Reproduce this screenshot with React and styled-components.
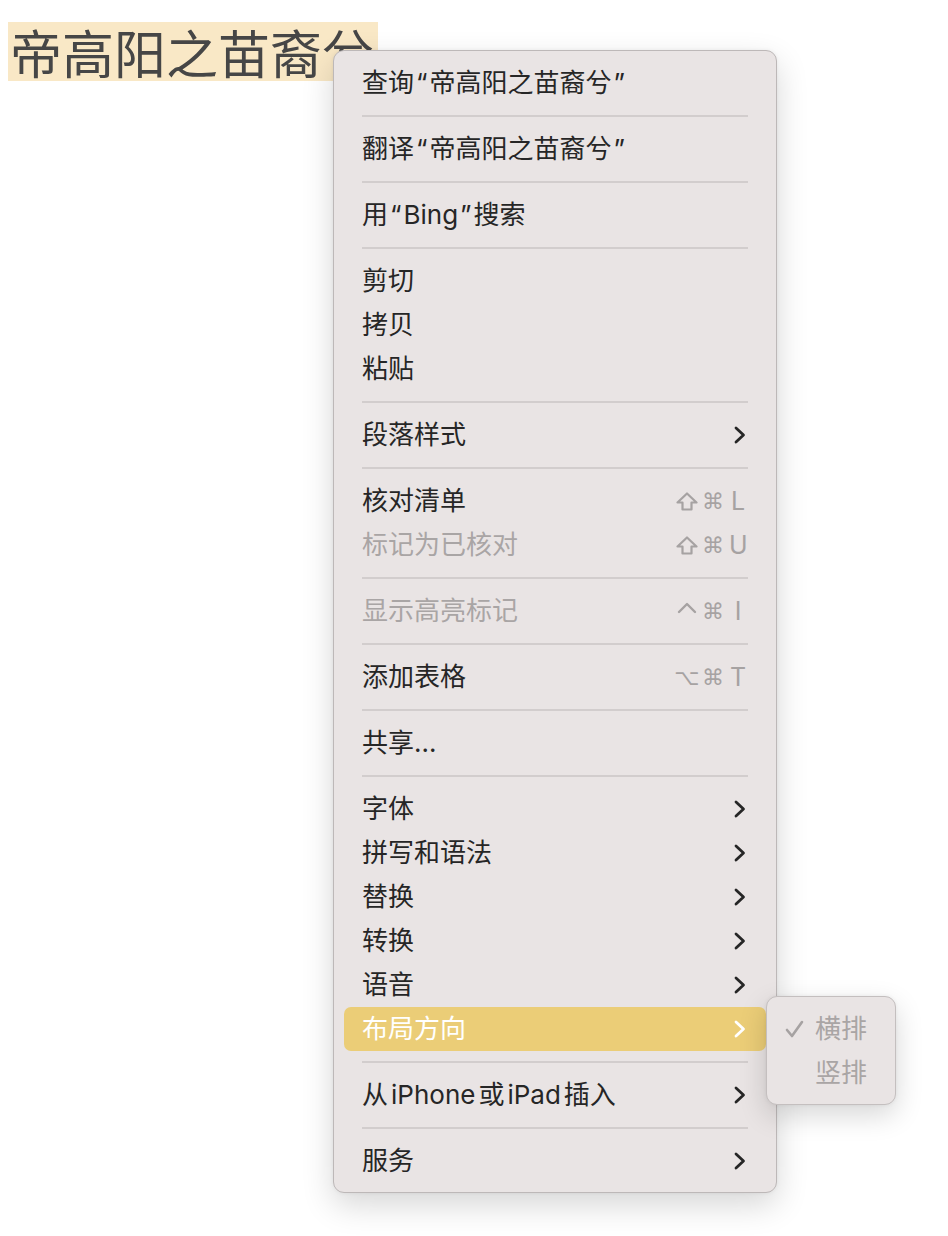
import React from "react";
import styled, { createGlobalStyle } from "styled-components";

const GlobalStyle = createGlobalStyle`
  html, body { margin: 0; padding: 0; background: #ffffff; }
  body { font-family: "Inter", "Noto Sans CJK SC", sans-serif; }
`;

const Page = styled.div`
  position: relative;
  width: 948px;
  height: 1236px;
  padding: 22px 0 0 8px;
  box-sizing: border-box;
  overflow: hidden;
`;

const Title = styled.span`
  display: inline-block;
  height: 59px;
  line-height: 59px;
  padding: 0 4px 0 2px;
  background: #f9e8c6;
  color: #464646;
  font-family: "Noto Sans CJK SC", sans-serif;
  font-size: 52px;
`;

const Menu = styled.div`
  position: absolute;
  left: 333px;
  top: 50px;
  width: 444px;
  box-sizing: border-box;
  padding: 10px 10px 9px;
  background: #e9e4e4;
  border: 1px solid #bdb8b8;
  border-radius: 11px;
  box-shadow: 0 12px 32px rgba(0, 0, 0, 0.16), 0 0 4px rgba(0, 0, 0, 0.06);
`;

const Row = styled.div`
  position: relative;
  display: flex;
  align-items: center;
  height: 44px;
  padding: 0 20px 0 18px;
  border-radius: 7px;
  background: ${(p) => (p.$active ? "#ebcd77" : "transparent")};
  color: ${(p) => (p.$active ? "#ffffff" : p.$disabled ? "#a9a5a5" : "#262626")};
  font-size: 26px;
  white-space: nowrap;
`;

const Label = styled.span`
  flex: 1;
  padding-bottom: 6px;
`;

const Quote = styled.span`
  margin: 0 2px;
`;

const Latin = styled.span`
  margin: 0 3px;
`;

const Shortcut = styled.span`
  display: flex;
  align-items: center;
  color: #a6a2a2;
  font-size: 24px;
  margin-right: -1px;
`;

const ModSlot = styled.span`
  display: inline-flex;
  justify-content: center;
  align-items: center;
  width: 22px;
  height: 24px;
  font-family: "DejaVu Sans", sans-serif;
  font-size: 22px;
  margin-left: ${(p) => p.$ml || 0}px;
`;

const Key = styled.span`
  display: inline-block;
  width: 18px;
  text-align: center;
  font-family: "Inter", sans-serif;
  font-size: 25px;
  margin-left: 5px;
`;

const Separator = styled.div`
  height: 22px;
  display: flex;
  align-items: center;
  margin: 0 18px;
  &::after {
    content: "";
    flex: 1;
    height: 2px;
    background: #d2cdcd;
  }
`;

const Submenu = styled.div`
  position: absolute;
  left: 100%;
  top: -11px;
  width: 130px;
  box-sizing: border-box;
  padding: 10px 0 9px;
  background: #e9e4e4;
  border: 1px solid #c4bfbf;
  border-radius: 11px;
  box-shadow: 0 10px 28px rgba(0, 0, 0, 0.16), 0 0 4px rgba(0, 0, 0, 0.06);
  z-index: 2;
`;

const SubRow = styled.div`
  display: flex;
  align-items: center;
  height: 44px;
  padding-left: 18px;
  color: #a9a5a5;
  font-size: 26px;
`;

const SubText = styled.span`
  padding-bottom: 5px;
`;

const CheckSlot = styled.span`
  display: inline-flex;
  width: 30px;
  align-items: center;
`;

const Chevron = ({ color }) => (
  <svg width="12" height="18" viewBox="0 0 12 18" style={{ display: "block" }}>
    <path
      d="M2 2 L9.5 9 L2 16"
      fill="none"
      stroke={color}
      strokeWidth="2.8"
      strokeLinecap="round"
      strokeLinejoin="round"
    />
  </svg>
);

const Check = () => (
  <svg width="19" height="18" viewBox="0 0 19 18" style={{ display: "block" }}>
    <path
      d="M2 10 L7 16 L17 2"
      fill="none"
      stroke="#a6a2a2"
      strokeWidth="2.6"
      strokeLinecap="round"
      strokeLinejoin="round"
    />
  </svg>
);

const ShiftIcon = () => (
  <svg width="22" height="19" viewBox="0 0 22 19" style={{ display: "block" }}>
    <path
      d="M11 1.5 L20.5 10.5 L15.5 10.5 L15.5 17.5 L6.5 17.5 L6.5 10.5 L1.5 10.5 Z"
      fill="none"
      stroke="#a6a2a2"
      strokeWidth="2.2"
      strokeLinejoin="round"
    />
  </svg>
);

const CtrlIcon = () => (
  <svg width="20" height="14" viewBox="0 0 20 14" style={{ display: "block", marginTop: "-6px" }}>
    <path
      d="M2 11 L10 3 L18 11"
      fill="none"
      stroke="#a6a2a2"
      strokeWidth="2.4"
      strokeLinecap="round"
      strokeLinejoin="round"
    />
  </svg>
);

const Mod = ({ k }) => {
  if (k === "⇧") return <ShiftIcon />;
  if (k === "⌃") return <CtrlIcon />;
  return k;
};

const Q = ({ children }) => <Quote>{children}</Quote>;
const L = ({ children }) => <Latin>{children}</Latin>;

const items = [
  { label: <>查询<Q>“</Q>帝高阳之苗裔兮<Q>”</Q></> },
  "sep",
  { label: <>翻译<Q>“</Q>帝高阳之苗裔兮<Q>”</Q></> },
  "sep",
  { label: <>用<Q>“</Q>Bing<Q>”</Q>搜索</> },
  "sep",
  { label: "剪切" },
  { label: "拷贝" },
  { label: "粘贴" },
  "sep",
  { label: "段落样式", sub: true },
  "sep",
  { label: "核对清单", keys: ["⇧", "L"] },
  { label: "标记为已核对", disabled: true, keys: ["⇧", "U"] },
  "sep",
  { label: "显示高亮标记", disabled: true, keys: ["⌃", "I"] },
  "sep",
  { label: "添加表格", keys: ["⌥", "T"] },
  "sep",
  { label: "共享…" },
  "sep",
  { label: "字体", sub: true },
  { label: "拼写和语法", sub: true },
  { label: "替换", sub: true },
  { label: "转换", sub: true },
  { label: "语音", sub: true },
  { label: "布局方向", sub: true, active: true },
  "sep",
  { label: <>从<L>iPhone</L>或<L>iPad</L>插入</>, sub: true },
  "sep",
  { label: "服务", sub: true },
];

export default function App() {
  return (
    <>
      <GlobalStyle />
      <Page>
        <Title>帝高阳之苗裔兮</Title>
        <Menu>
          {items.map((it, i) =>
            it === "sep" ? (
              <Separator key={i} />
            ) : (
              <Row key={i} $active={it.active} $disabled={it.disabled}>
                <Label>{it.label}</Label>
                {it.keys && (
                  <Shortcut>
                    <ModSlot>
                      <Mod k={it.keys[0]} />
                    </ModSlot>
                    <ModSlot $ml={4}>⌘</ModSlot>
                    <Key>{it.keys[1]}</Key>
                  </Shortcut>
                )}
                {it.sub && <Chevron color={it.active ? "#ffffff" : "#262626"} />}
                {it.active && (
                  <Submenu>
                    <SubRow>
                      <CheckSlot>
                        <Check />
                      </CheckSlot>
                      <SubText>横排</SubText>
                    </SubRow>
                    <SubRow>
                      <CheckSlot />
                      <SubText>竖排</SubText>
                    </SubRow>
                  </Submenu>
                )}
              </Row>
            )
          )}
        </Menu>
      </Page>
    </>
  );
}
